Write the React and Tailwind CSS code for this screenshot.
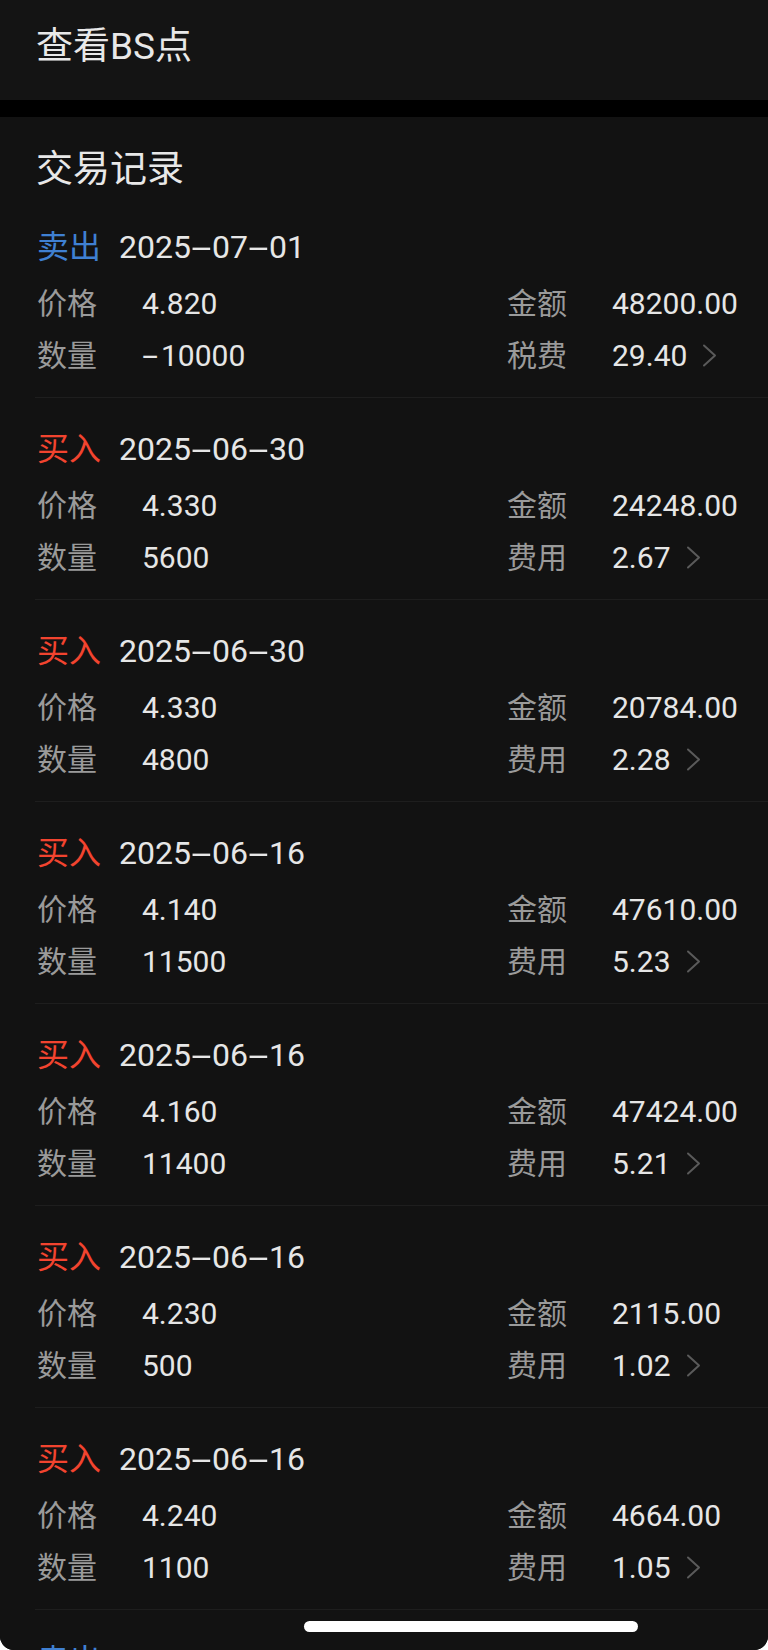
import React from "react";

const records = [
  { side: "卖出", date: "2025-07-01", price: "4.820", amount: "48200.00", qty: "-10000", feeLabel: "税费", fee: "29.40" },
  { side: "买入", date: "2025-06-30", price: "4.330", amount: "24248.00", qty: "5600", feeLabel: "费用", fee: "2.67" },
  { side: "买入", date: "2025-06-30", price: "4.330", amount: "20784.00", qty: "4800", feeLabel: "费用", fee: "2.28" },
  { side: "买入", date: "2025-06-16", price: "4.140", amount: "47610.00", qty: "11500", feeLabel: "费用", fee: "5.23" },
  { side: "买入", date: "2025-06-16", price: "4.160", amount: "47424.00", qty: "11400", feeLabel: "费用", fee: "5.21" },
  { side: "买入", date: "2025-06-16", price: "4.230", amount: "2115.00", qty: "500", feeLabel: "费用", fee: "1.02" },
  { side: "买入", date: "2025-06-16", price: "4.240", amount: "4664.00", qty: "1100", feeLabel: "费用", fee: "1.05" },
  { side: "卖出", date: "2025-06-13", price: "4.300", amount: "8600.00", qty: "-2000", feeLabel: "税费", fee: "5.10" },
];

function WideDash() {
  return (
    <span className="inline-block w-[21px] text-center">
      <span className="inline-block scale-x-[2.3]">-</span>
    </span>
  );
}

function DateText({ text }) {
  const parts = text.split("-");
  return (
    <span>
      {parts.map((p, i) => (
        <React.Fragment key={i}>
          {i > 0 && <WideDash />}
          {p}
        </React.Fragment>
      ))}
    </span>
  );
}

function QtyText({ text }) {
  if (text.startsWith("-")) {
    return (
      <span>
        <span className="inline-block w-[17px] text-center">
          <span className="inline-block scale-x-[1.9]">-</span>
        </span>
        <span className="ml-[2px]">{text.slice(1)}</span>
      </span>
    );
  }
  return <span>{text}</span>;
}

function Chevron() {
  return (
    <svg width="15" height="23" viewBox="0 0 15 23" className="ml-[15px] shrink-0">
      <polyline points="2,1.5 13,11.5 2,21.5" fill="none" stroke="#5a5a5a" strokeWidth="2" strokeLinecap="round" strokeLinejoin="round" />
    </svg>
  );
}

function Field({ label, children, chevron }) {
  return (
    <div className="flex items-center">
      <span className="w-[105px] shrink-0 text-[30px] text-[#9a9a9a]">{label}</span>
      <span className="text-[30px] text-[#e6e6e6]">{children}</span>
      {chevron && <Chevron />}
    </div>
  );
}

function Record({ r }) {
  const sell = r.side === "卖出";
  return (
    <div className="ml-[35px] border-b border-[#1e1e1e] pt-[29px] pb-[20px]">
      <div className="flex h-[44px] items-center pl-[2px]">
        <span className={`text-[32px] ${sell ? "text-[#3f80d2]" : "text-[#f2442f]"}`}>{r.side}</span>
        <span className="ml-[18px] text-[32px] text-[#e6e6e6]">
          <DateText text={r.date} />
        </span>
      </div>
      <div className="mt-[12px] grid h-[44px] grid-cols-[470px_1fr] items-center pl-[2px]">
        <Field label="价格">{r.price}</Field>
        <Field label="金额">{r.amount}</Field>
      </div>
      <div className="mt-[8px] grid h-[44px] grid-cols-[470px_1fr] items-center pl-[2px]">
        <Field label="数量">
          <QtyText text={r.qty} />
        </Field>
        <Field label={r.feeLabel} chevron>
          {r.fee}
        </Field>
      </div>
    </div>
  );
}

export default function App() {
  return (
    <div
      className="relative h-[1650px] w-[768px] overflow-hidden rounded-b-[14px] bg-black"
      style={{ fontFamily: "Roboto, 'Noto Sans CJK SC', sans-serif" }}
    >
      <div className="flex h-[100px] items-center bg-[#141414] px-[36px] pb-[6px]">
        <span className="text-[37px] font-normal text-[#e8e8e8]">查看BS点</span>
      </div>
      <div className="h-[17px] bg-black" />
      <div className="bg-[#121212]">
        <div className="flex h-[79px] items-end px-[36px] pb-[2px]">
          <span className="text-[37px] leading-[48px] font-normal text-[#e8e8e8]">交易记录</span>
        </div>
        {records.map((r, i) => (
          <Record key={i} r={r} />
        ))}
      </div>
      <div className="absolute left-[304px] top-[1621px] h-[11px] w-[334px] rounded-full bg-white" />
    </div>
  );
}
